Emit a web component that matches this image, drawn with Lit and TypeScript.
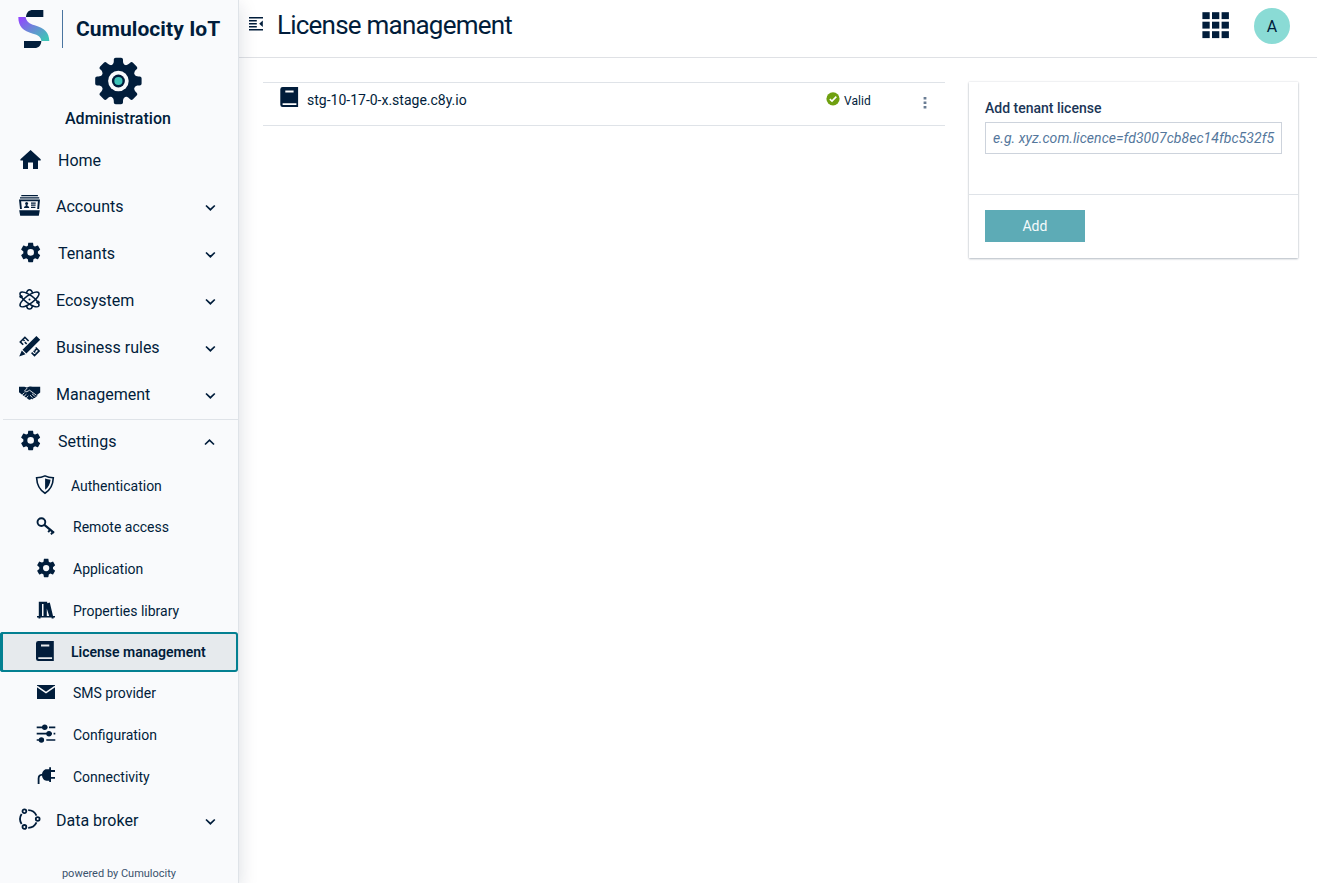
import { LitElement, html, svg, css } from "lit";
import { customElement, property } from "lit/decorators.js";
import { classMap } from "lit/directives/class-map.js";

const gear = "M19.43 12.98c.04-.32.07-.64.07-.98s-.03-.66-.07-.98l2.11-1.65c.19-.15.24-.42.12-.64l-2-3.46c-.12-.22-.39-.3-.61-.22l-2.49 1c-.52-.4-1.08-.73-1.69-.98l-.38-2.65C14.46 2.18 14.25 2 14 2h-4c-.25 0-.46.18-.49.42l-.38 2.65c-.61.25-1.17.59-1.69.98l-2.49-1c-.23-.09-.49 0-.61.22l-2 3.46c-.13.22-.07.49.12.64l2.11 1.65c-.04.32-.07.65-.07.98s.03.66.07.98l-2.11 1.65c-.19.15-.24.42-.12.64l2 3.46c.12.22.39.3.61.22l2.49-1c.52.4 1.08.73 1.69.98l.38 2.65c.03.24.24.42.49.42h4c.25 0 .46-.18.49-.42l.38-2.65c.61-.25 1.17-.59 1.69-.98l2.49 1c.23.09.49 0 .61-.22l2-3.46c.12-.22.07-.49-.12-.64l-2.11-1.65zM12 15.4a3.4 3.4 0 1 1 0-6.8a3.4 3.4 0 0 1 0 6.8z";

const icons: Record<string, unknown> = {
  home: svg`<path d="M12.6 2 2.4 11.3v1.2H5V21h5v-6.4h5V21h5v-8.5h2.7v-1.2z"/>`,
  accounts: svg`<path d="M3.3 1h16.6v1.2H3.3zM2 3.3h19.2v1.3H2z"/><path fill-rule="evenodd" d="M1 5.6h21L21.100 15h-1.900l.7-7.700H3.100L3.900 15H2zM1.2 16.2h20.600l-1 5.500H2.200z"/><circle cx="8.600" cy="9.600" r="1.500"/><path d="M6 14c0-1.600 1-1.800 1.700-2v-1h1.800v1c.8.2 1.700.4 1.700 2zM13 8.500h4.700v1.200H13zM13 10.600h4.600v1.200H13zM13 12.700h4.400v1.200H13z"/>`,
  gear: svg`<path transform="translate(.95 -.3) scale(.975)" d=${gear}/>`,
  gearSmall: svg`<path transform="translate(1.1 1) scale(.92)" d=${gear}/>`,
  eco: svg`<g fill="none" stroke="currentColor" stroke-width="1.5"><ellipse cx="11.5" cy="11.4" rx="11.4" ry="4" transform="rotate(36 11.5 11.4)"/><ellipse cx="11.5" cy="11.4" rx="11.4" ry="4" transform="rotate(-36 11.5 11.4)"/><path d="M8.400 5C9.600.600 13.400.600 14.600 5M8.400 17.800C9.600 22.200 13.400 22.200 14.600 17.800"/></g><circle cx="11.500" cy="11.400" r="1"/><circle cx="3" cy="8.600" r="1.700"/><circle cx="20" cy="14.300" r="1.700"/>`,
  rules: svg`<path d="M18.400.900 22.200 4.700 8.400 18.600 4.500 14.700zM3.800 15.600 7.500 19.300 1.200 21.600z"/><g fill="none" stroke="currentColor" stroke-width="1.600"><path d="M8.700 9 6.800 7.100M5.200 9.800 2.300 6.900 6.900 2.300 10.600 6M4.900 4.300 6.600 6M13.600 17.600 16.500 20.500 21.100 15.900 17.700 12.500M15.600 15.800 17.300 17.500M18.800 13.600 16.800 15.600"/></g>`,
  hands: svg`<path d="M1 4.800H6.400l2.400.8 2.900-1.100C13.500 4.200 15.500 5 17 4.800h5.200v5.700l-3 2.200c.4 1.400-.6 2.200-1.600 1.800 0 1.200-1 1.900-2 1.400-.3 1.200-1.500 1.600-2.400.9-.6 1.200-2 1.300-2.800.5L4.800 13.200 1 10.300z"/><g fill="none" stroke="#f9fafc" stroke-width=".850"><path d="M9.300 5.900 6.500 9.100C8 10.700 9.800 9.200 11.500 8.200L18.400 13.200M4.200 12.700 6.500 10.700M6 14.400 8.400 12.200M8.200 15.900 10.300 13.900M12 13.200 14.600 15.700M14 11.800 16.800 14.300"/></g>`,
  shield: svg`<path fill="none" stroke="currentColor" stroke-width="1.600" d="M11 2.900C8.500 4.100 5.500 4.700 2.600 4.800 2.900 11.500 5.400 16.900 11 20.200 16.600 16.900 19 11.500 19.300 4.800 16.500 4.700 13.500 4.100 11 2.900z"/><path d="M11.100 5.600c1.700.7 3.600 1 5.500 1.100-.5 4.300-2.400 7.800-5.500 10.100z"/>`,
  key: svg`<g fill="none" stroke="currentColor" transform="translate(0 .300)"><circle cx="7.400" cy="7.800" r="3.900" stroke-width="1.900"/><path stroke-width="2.100" d="M10.400 10.600 20 18.600"/><path stroke-width="1.900" d="M14.200 17.800 16.600 14.900M17 20 19.400 17"/></g>`,
  library: svg`<path fill-rule="evenodd" d="M3 18h1.800V3.700h8.400v1.500l2.600-.7L19 18h2v1.600h-1.400v1h-2v-1H6.500v1h-2v-1H3zM8 6v12h1.500V6zM12.800 10.500V18h2.400z"/>`,
  book: svg`<path fill-rule="evenodd" d="M4.300 1h15.500v20H4.300A2.400 2.400 0 0 1 2 18.700V3.300A2.400 2.400 0 0 1 4.300 1zM7 4.600v1.800h8.300V4.600zM4.300 17.200v1.700h13.800v-1.700z"/>`,
  mail: svg`<path d="M3 5h18v14H3z"/><path fill="none" stroke="#f9fafc" stroke-width="1.600" d="M3 6.300 12 12.600 21 6.300"/>`,
  sliders: svg`<g stroke="currentColor" stroke-width="1.700"><path d="M2.700 5.300H13.300M15 5.300h6.300M2.700 11.700H18M19.600 11.700h1.700M2.700 18H10M12.300 18h9"/></g><circle cx="10.700" cy="5.300" r="2.700"/><circle cx="15" cy="11.700" r="2.700"/><circle cx="7.400" cy="18" r="2.700"/>`,
  plug: svg`<path d="M15.200 3.300H17V6.100H21V7.900H17V12.900H21V14.700H17V18H15.200V16.700H12.500C10 16.700 8 14 8 11S10 5.300 12.500 5.300H15.200z"/><path fill="none" stroke="currentColor" stroke-width="1.800" d="M4.600 20V14.500C4.600 12 5.700 10.900 8.500 10.700"/>`,
  broker: svg`<g fill="none" stroke="currentColor" stroke-width="1.800"><circle cx="6.400" cy="3.300" r="1.900"/><circle cx="19.700" cy="11" r="1.900"/><circle cx="6.400" cy="18.900" r="1.900"/><path d="M3.600 5.900A9.500 9.500 0 0 0 3.600 16.100M10.200 2.200A9.300 9.300 0 0 1 18.500 7.700M18.500 14.400A9.300 9.300 0 0 1 10.200 19.900"/></g>`,
};

const icon = (name: string) =>
  html`<svg class="icon" width="24" height="24" viewBox="0 0 24 24" fill="currentColor">${icons[name]}</svg>`;

interface Entry {
  label: string;
  icon: string;
  tight?: boolean;
  open?: boolean;
  chevron?: boolean;
  kind?: string;
}

const top: Entry[] = [
  { label: "Home", icon: "home", kind: "home" },
  { label: "Accounts", icon: "accounts", tight: true, chevron: true },
  { label: "Tenants", icon: "gear", chevron: true },
  { label: "Ecosystem", icon: "eco", tight: true, chevron: true },
  { label: "Business rules", icon: "rules", tight: true, chevron: true },
  { label: "Management", icon: "hands", tight: true, chevron: true },
  { label: "Settings", icon: "gear", chevron: true, open: true, kind: "settings" },
];
const sub: Entry[] = [
  { label: "Authentication", icon: "shield", tight: true, kind: "first" },
  { label: "Remote access", icon: "key" },
  { label: "Application", icon: "gearSmall" },
  { label: "Properties library", icon: "library" },
  { label: "License management", icon: "book", tight: true, kind: "active" },
  { label: "SMS provider", icon: "mail" },
  { label: "Configuration", icon: "sliders" },
  { label: "Connectivity", icon: "plug", kind: "last" },
];

@customElement("side-nav")
class SideNav extends LitElement {
  @property() product = "Cumulocity IoT";

  static styles = css`
    :host { display: flex; flex-direction: column; height: 883px; box-sizing: border-box; }
    .brand { display: flex; flex: none; padding: 9px 0 0 18px; height: 48px; box-sizing: border-box; align-items: flex-start; }
    .rule { width: 1px; height: 38px; margin: 1px 13px 0 12px; background: #4a74a0; }
    .name { font-size: 21px; font-weight: 700; line-height: 40px; white-space: nowrap; letter-spacing: 0.080px; }
    .app { display: flex; flex: none; flex-direction: column; align-items: center; height: 89px; padding: 9px 2px 0 0; box-sizing: border-box; }
    .app-name { font-size: 16px; font-weight: 500; line-height: 20px; margin-top: 4px; letter-spacing: 0.040px; }
    .row { display: flex; align-items: center; height: 47px; padding: 0 22px 0 18px; box-sizing: border-box; font-size: 16px; white-space: nowrap; flex: none; }
    .row .icon { align-self: flex-start; margin-top: 11px; flex: none; }
    .home { height: 46px; }
    .settings { position: relative; }
    .settings::before { content: ""; position: absolute; left: 3px; right: 0; top: 1px; height: 1px; background: #dfe3e8; }
    .label { margin-left: 16px; flex: 1; }
    .tight .label { margin-left: 14px; }
    .subs { flex: none; }
    .subs .row { height: 42px; padding-left: 34px; font-size: 14px; }
    .subs .row .icon { margin-top: 8px; }
    .subs .label { margin-left: 15px; }
    .subs .tight .label { margin-left: 13px; }
    .subs .first, .subs .last { height: 41px; }
    .subs .active { height: 40px; background: #e6eaed; box-shadow: inset 0 0 0 2px #038091, inset 3px 0 0 #038091; border-radius: 3px; font-weight: 600; }
    .footer { flex: none; margin-top: 20px; text-align: center; font-size: 11px; line-height: 20px; color: #3a526d; }
  `;

  row(e: Entry) {
    return html`<div class=${classMap({ row: true, tight: !!e.tight, [e.kind ?? "plain"]: true })}>
      ${icon(e.icon)}<span class="label">${e.label}</span>
      ${e.chevron
        ? html`<svg width="12" height="8" viewBox="0 0 12 8" fill="none" stroke="currentColor" stroke-width="1.700">
            <path d=${e.open ? "M1 6.500 5.500 2.200 10 6.500" : "M2 2.500 6.400 6.700 10.800 2.500"} /></svg>`
        : ""}
    </div>`;
  }

  render() {
    return html`
      <div class="brand">
        <svg width="32" height="40" viewBox="54 27 96 120">
          <defs><linearGradient id="wave" x1="0" y1="0" x2="1" y2="1">
            <stop offset="0.050" stop-color="#9146ff" /><stop offset="0.450" stop-color="#6c86d8" /><stop offset="0.900" stop-color="#3fc3b8" />
          </linearGradient></defs>
          <path fill="#011d3b" d="M78 51C79 38 86 30 99 30H130V51zM72 144V123H124C123 137 116 144 104 144z" />
          <path fill="url(#wave)" d="M55 51H77C79 65 88 71 104 76 134 85 147 97 148 123H124C123 110 114 105 99 101 69 93 55 80 55 51z" />
        </svg>
        <div class="rule"></div>
        <div class="name">${this.product}</div>
      </div>
      <div class="app">
        <svg width="48" height="48" viewBox="-24.400 -24 48 48" fill="#011d3b">
          <circle r="17.200" />
          ${[0, 45, 90, 135, 180, 225, 270, 315].map(
            (a) => svg`<path transform="rotate(${a})" d="M-7-15.500C-5-17-4.600-18.500-4.600-20V-21.200C-4.600-22.400-3.800-23.200-2.600-23.200H2.600C3.800-23.200 4.600-22.400 4.600-21.200V-20C4.600-18.500 5-17 7-15.500z"/>`
          )}
          <circle r="10.300" fill="#f9fafc" /><circle r="6.500" /><circle r="4.100" fill="#3cc2b7" />
        </svg>
        <div class="app-name">Administration</div>
      </div>
      ${top.map((e) => this.row(e))}
      <div class="subs">${sub.map((e) => this.row(e))}</div>
      ${this.row({ label: "Data broker", icon: "broker", tight: true, chevron: true })}
      <div class="footer">powered by Cumulocity</div>
    `;
  }
}

@customElement("app-root")
class AppRoot extends LitElement {
  static styles = css`
    :host { display: flex; height: 883px; overflow: hidden; background: #fff; color: #011d3b; font-family: Roboto, sans-serif; font-size: 14px; }
    side-nav { width: 239px; flex: none; position: relative; z-index: 1; background: #f9fafc; border-right: 1px solid #dfe3e8; box-shadow: 0 6px 18px rgba(1, 29, 59, 0.150); }
    .page { flex: 1; min-width: 0; }
    header { display: flex; height: 58px; box-sizing: border-box; border-bottom: 1px solid #dfe1e5; padding-left: 9px; padding-right: 27px; }
    .collapse { margin-top: 16px; }
    h1 { margin: 0 auto 0 13px; font-weight: 400; font-size: 26px; line-height: 50px; letter-spacing: -0.780px; }
    .apps { margin: 11px 24px 0 0; }
    .avatar { width: 36px; height: 36px; margin-top: 8px; border-radius: 50%; background: #8adbd5; text-align: center; line-height: 37px; font-size: 16px; }
    main { display: flex; align-items: flex-start; padding: 24px 19px 0 24px; gap: 24px; }
    .item { flex: 1; height: 44px; box-sizing: border-box; border-top: 1px solid #dfe3e8; border-bottom: 1px solid #dfe3e8; display: flex; padding-left: 16px; line-height: 34px; }
    .item .icon { margin-top: 4px; }
    .domain { flex: 1; margin-left: 4px; }
    .check { margin: 9px 4px 0 0; }
    .valid { font-size: 12px; width: 79px; line-height: 36px; letter-spacing: 0.080px; }
    .dots { margin: 13px 18px 0 0; }
    .card { width: 329px; height: 176px; box-shadow: 0 1px 2px rgba(1, 29, 59, 0.260), 0 0 2px rgba(1, 29, 59, 0.140); }
    .form { height: 113px; padding: 16px 16px 0; box-sizing: border-box; border-bottom: 1px solid #dfe3e8; width: 329px; }
    label { display: block; font-weight: 500; line-height: 20px; color: #1b3657; margin-bottom: 4px; }
    .input { height: 32px; box-sizing: border-box; border: 1px solid #cdd3dc; padding: 0 7px; line-height: 30px; font-style: italic; color: #54779c; white-space: nowrap; overflow: hidden; letter-spacing: 0.055px; }
    .add { display: block; width: 100px; height: 32px; margin: 15px 16px 16px; border: 0; padding: 0; background: #5dabb6; color: #f4fafb; font: 14px Roboto, sans-serif; letter-spacing: 0.100px; }
  `;

  render() {
    return html`
      <side-nav></side-nav>
      <div class="page">
        <header>
          <svg class="collapse" width="16" height="16" viewBox="0 0 16 16" fill="none" stroke="#011d3b" stroke-width="1.500">
            <path d="M1 1.700H15M1 4.700H8.800M1 7.700H8.800M1 10.700H8.800M1 13.800H15" /><path fill="#011d3b" stroke="none" d="M14.800 4.400V11L11.200 7.700z" />
          </svg>
          <h1>License management</h1>
          <svg class="apps" width="28" height="28" viewBox="0 0 28 28" fill="#011d3b">
            ${[1.200, 10.700, 20.200].map((y) => [0.400, 10, 19.600].map((x) => svg`<rect x=${x} y=${y} width="7.300" height="6.900"/>`))}
          </svg>
          <div class="avatar">A</div>
        </header>
        <main>
          <div class="item">
            <svg class="icon" width="24" height="24" viewBox="0.700 1 24 24" fill="currentColor">${icons.book}</svg>
            <span class="domain">stg-10-17-0-x.stage.c8y.io</span>
            <svg class="check" width="14" height="14" viewBox="0 0 14 14"><circle cx="7" cy="6.800" r="6.600" fill="#6fa010" /><path fill="none" stroke="#fff" stroke-width="1.600" d="M3.800 7.100 6 9.100 10.300 4.600" /></svg>
            <span class="valid">Valid</span>
            <svg class="dots" width="4" height="14" viewBox="0 0 4 14" fill="#6a7d94"><path d="M.600.900h2.800v2.500H.600zM.600 5.500h2.800v2.500H.600zM.600 10.100h2.800v2.500H.600z" /></svg>
          </div>
          <div class="card">
            <div class="form"><label>Add tenant license</label><div class="input">e.g. xyz.com.licence=fd3007cb8ec14fbc532f5</div></div>
            <button class="add">Add</button>
          </div>
        </main>
      </div>
    `;
  }
}
